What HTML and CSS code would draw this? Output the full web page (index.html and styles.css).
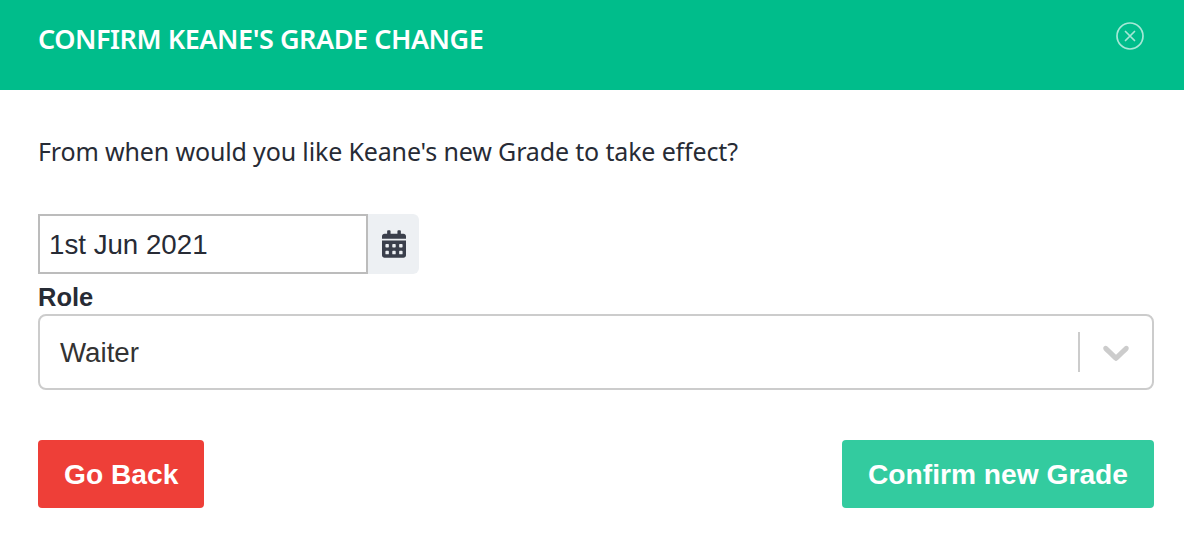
FILE: index.html
```html
<!DOCTYPE html>
<html lang="en">

<head>
    <meta charset="UTF-8">
    <meta name="viewport" content="width=device-width, initial-scale=1.0">
    <title>Confirm Grade Change</title>
    <link rel="stylesheet" href="styles.css">
</head>

<body>
    <div class="modal">
        <header class="modal-header">
            <h1>Confirm Keane's Grade Change</h1>
            <button class="close-button" aria-label="Close">
                <svg width="30" height="30" viewBox="0 0 30 30" fill="none" stroke="currentColor" stroke-width="1.7" stroke-linecap="round">
                    <circle cx="15" cy="15" r="13"/>
                    <path d="M10.500 10.500l9 9M19.500 10.500l-9 9"/>
                </svg>
            </button>
        </header>

        <div class="modal-body">
            <p class="question">From when would you like Keane's new Grade to take effect?</p>

            <div class="date-group">
                <div class="date-input">1st Jun 2021</div>
                <div class="date-addon">
                    <svg width="24" height="28" viewBox="0 0 448 512" fill="currentColor">
                        <path d="M0 464c0 26.500 21.500 48 48 48h352c26.500 0 48-21.500 48-48V192H0v272zm320-196c0-6.600 5.400-12 12-12h40c6.600 0 12 5.400 12 12v40c0 6.600-5.400 12-12 12h-40c-6.600 0-12-5.400-12-12v-40zm0 128c0-6.600 5.400-12 12-12h40c6.600 0 12 5.400 12 12v40c0 6.600-5.400 12-12 12h-40c-6.600 0-12-5.400-12-12v-40zM192 268c0-6.600 5.400-12 12-12h40c6.600 0 12 5.400 12 12v40c0 6.600-5.400 12-12 12h-40c-6.600 0-12-5.400-12-12v-40zm0 128c0-6.600 5.400-12 12-12h40c6.600 0 12 5.400 12 12v40c0 6.600-5.400 12-12 12h-40c-6.600 0-12-5.400-12-12v-40zM64 268c0-6.600 5.400-12 12-12h40c6.600 0 12 5.400 12 12v40c0 6.600-5.400 12-12 12H76c-6.600 0-12-5.400-12-12v-40zm0 128c0-6.600 5.400-12 12-12h40c6.600 0 12 5.400 12 12v40c0 6.600-5.400 12-12 12H76c-6.600 0-12-5.400-12-12v-40zM400 64h-48V16c0-8.800-7.200-16-16-16h-32c-8.800 0-16 7.200-16 16v48H160V16c0-8.800-7.200-16-16-16h-32c-8.800 0-16 7.200-16 16v48H48C21.500 64 0 85.500 0 112v48h448v-48c0-26.500-21.500-48-48-48z"/>
                    </svg>
                </div>
            </div>

            <label class="field-label">Role</label>
            <div class="select">
                <span class="select-value">Waiter</span>
                <span class="select-separator"></span>
                <span class="select-arrow">
                    <svg width="44" height="44" viewBox="0 0 20 20" fill="currentColor">
                        <path d="M4.516 7.548c.436-.446 1.043-.481 1.576 0L10 11.295l3.908-3.747c.533-.481 1.141-.446 1.574 0 .436.445.408 1.197 0 1.615-.406.418-4.695 4.502-4.695 4.502a1.095 1.095 0 0 1-1.576 0S4.924 9.581 4.516 9.163c-.409-.418-.436-1.170 0-1.615z"/>
                    </svg>
                </span>
            </div>

            <div class="actions">
                <button class="button button-back">Go Back</button>
                <button class="button button-confirm">Confirm new Grade</button>
            </div>
        </div>
    </div>
</body>

</html>
```

FILE: styles.css
```css
* {
    box-sizing: border-box;
}

body {
    margin: 0;
    background-color: #fff;
    font-family: 'Liberation Sans', Arial, sans-serif;
    color: #272b35;
}

.modal-header {
    display: flex;
    justify-content: space-between;
    height: 90px;
    padding: 21px 39px 0 38px;
    background-color: #00bd8b;
    color: #fff;
}

.modal-header h1 {
    margin: 0;
    font-family: 'Noto Sans', sans-serif;
    font-size: 27px;
    line-height: 36px;
    font-weight: 600;
    letter-spacing: -0.45px;
    text-transform: uppercase;
}

.close-button {
    display: flex;
    width: 30px;
    height: 30px;
    padding: 0;
    border: none;
    background: none;
    color: rgba(255, 255, 255, 0.65);
}

.modal-body {
    padding: 43px 30px 0 38px;
}

.question {
    margin: 0 0 45px;
    font-family: 'Noto Sans', sans-serif;
    font-size: 25px;
    line-height: 36px;
    letter-spacing: -0.15px;
}

.date-group {
    display: flex;
    width: 381px;
    height: 60px;
}

.date-input {
    width: 330px;
    padding-left: 9px;
    border: 2px solid #bcbcbc;
    font-size: 27.7px;
    line-height: 58px;
}

.date-addon {
    display: flex;
    flex: 1;
    align-items: center;
    justify-content: center;
    border-radius: 0 6px 6px 0;
    background-color: #edf0f3;
    color: #3a3f4b;
}

.field-label {
    display: block;
    height: 40px;
    font-size: 25.5px;
    font-weight: 700;
    line-height: 46px;
}

.select {
    display: flex;
    align-items: center;
    height: 76px;
    border: 2px solid #ccc;
    border-radius: 8px;
    color: #333;
}

.select-value {
    flex: 1;
    padding: 2px 0 0 20px;
    font-size: 27.7px;
}

.select-separator {
    width: 2px;
    height: 40px;
    background-color: #ccc;
}

.select-arrow {
    display: flex;
    padding: 0 14px;
    color: #ccc;
}

.actions {
    display: flex;
    justify-content: space-between;
    margin-top: 50px;
}

.button {
    height: 68px;
    padding: 0 26px;
    border: none;
    border-radius: 4px;
    color: #fff;
    font-family: inherit;
    font-size: 28.2px;
    font-weight: 700;
}

.button-back {
    background-color: #ee3f38;
}

.button-confirm {
    background-color: #33cb9f;
}
```
